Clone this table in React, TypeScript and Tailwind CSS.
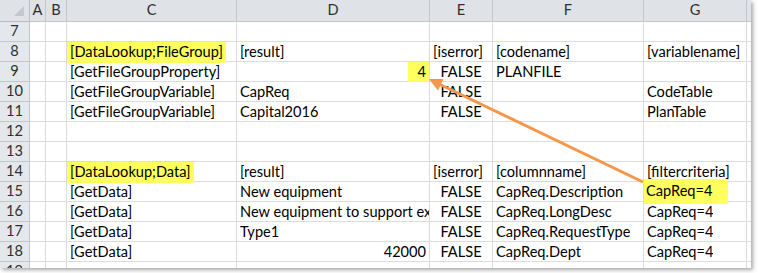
import React from 'react';

type Align = 'left' | 'center' | 'right';
type Cell = { text: string; align?: Align; mark?: 'lead' | 'num' | 'crit' };
type Row = { n: number; cells?: Partial<Record<'C' | 'D' | 'E' | 'F' | 'G', Cell>> };

const COLS = ['A', 'B', 'C', 'D', 'E', 'F', 'G'] as const;

const ROWS: Row[] = [
  { n: 7 },
  {
    n: 8,
    cells: {
      C: { text: '[DataLookup;FileGroup]', mark: 'lead' },
      D: { text: '[result]' },
      E: { text: '[iserror]' },
      F: { text: '[codename]' },
      G: { text: '[variablename]' },
    },
  },
  {
    n: 9,
    cells: {
      C: { text: '[GetFileGroupProperty]' },
      D: { text: '4', align: 'right', mark: 'num' },
      E: { text: 'FALSE', align: 'center' },
      F: { text: 'PLANFILE' },
    },
  },
  {
    n: 10,
    cells: {
      C: { text: '[GetFileGroupVariable]' },
      D: { text: 'CapReq' },
      E: { text: 'FALSE', align: 'center' },
      G: { text: 'CodeTable' },
    },
  },
  {
    n: 11,
    cells: {
      C: { text: '[GetFileGroupVariable]' },
      D: { text: 'Capital2016' },
      E: { text: 'FALSE', align: 'center' },
      G: { text: 'PlanTable' },
    },
  },
  { n: 12 },
  { n: 13 },
  {
    n: 14,
    cells: {
      C: { text: '[DataLookup;Data]', mark: 'lead' },
      D: { text: '[result]' },
      E: { text: '[iserror]' },
      F: { text: '[columnname]' },
      G: { text: '[filtercriteria]' },
    },
  },
  {
    n: 15,
    cells: {
      C: { text: '[GetData]' },
      D: { text: 'New equipment' },
      E: { text: 'FALSE', align: 'center' },
      F: { text: 'CapReq.Description' },
      G: { text: 'CapReq=4', mark: 'crit' },
    },
  },
  {
    n: 16,
    cells: {
      C: { text: '[GetData]' },
      D: { text: 'New equipment to support expansion' },
      E: { text: 'FALSE', align: 'center' },
      F: { text: 'CapReq.LongDesc' },
      G: { text: 'CapReq=4' },
    },
  },
  {
    n: 17,
    cells: {
      C: { text: '[GetData]' },
      D: { text: 'Type1' },
      E: { text: 'FALSE', align: 'center' },
      F: { text: 'CapReq.RequestType' },
      G: { text: 'CapReq=4' },
    },
  },
  {
    n: 18,
    cells: {
      C: { text: '[GetData]' },
      D: { text: '42000', align: 'right' },
      E: { text: 'FALSE', align: 'center' },
      F: { text: 'CapReq.Dept' },
      G: { text: 'CapReq=4' },
    },
  },
  { n: 19 },
];

function DataCell({ cell }: { cell?: Cell }) {
  const align = cell?.align ?? 'left';
  const justify =
    align === 'right' ? 'justify-end' : align === 'center' ? 'justify-center' : 'justify-start';

  let content: React.ReactNode = null;
  if (cell) {
    if (cell.mark === 'lead') {
      content = (
        <span className="flex h-[21px] items-center self-start bg-[#ffff5e] pl-[3px] pr-[3px]">{cell.text}</span>
      );
    } else if (cell.mark === 'num') {
      content = <span className="flex h-[20px] items-center self-start bg-[#ffff5e] pl-[10px] pr-[3px]">{cell.text}</span>;
    } else if (cell.mark === 'crit') {
      content = (
        <span className="-mt-[3px] flex h-[25px] items-center self-start bg-[#ffff5e] pl-[2px] pr-[16px]">{cell.text}</span>
      );
    } else {
      content = (
        <span
          className={`block max-w-full overflow-hidden leading-[18px] ${
            align === 'left' ? 'pl-[3px]' : align === 'right' ? 'pr-[3px]' : ''
          }`}
        >
          {cell.text}
        </span>
      );
    }
  }

  return (
    <div
      className={`flex h-[20px] items-center whitespace-nowrap border-b border-r border-[#dadcdd] ${justify} ${
        cell?.mark ? 'overflow-visible' : 'overflow-hidden'
      }`}
    >
      {content}
    </div>
  );
}

export default function App() {
  return (
    <div className="min-h-screen bg-white">
      <div
        className="relative h-[268px] w-[751px] overflow-hidden bg-white text-[14.6px] leading-none text-black shadow-[2px_2px_4px_rgba(0,0,0,0.35)]"
        style={{ fontFamily: 'Lato, "Liberation Sans", sans-serif' }}
      >
        <div className="grid grid-cols-[30px_16px_21px_170px_193px_63px_151px_103px_4px]">
          {/* corner + column headers */}
          <div className="relative h-[22px] border-b border-r border-[#b9bdc3] bg-[#dfe3e8]">
            <svg className="absolute left-[14px] top-[6px]" width="11" height="11" viewBox="0 0 11 11">
              <path d="M10 0 L10 10 L0 10 Z" fill="#c4c8ce" />
            </svg>
          </div>
          {COLS.map((c) => (
            <div
              key={c}
              className="flex h-[22px] items-center justify-center border-b border-r border-[#c3c7cd] bg-[#dfe3e8] text-[#2f2f2f]"
            >
              {c}
            </div>
          ))}
          <div className="h-[22px] border-b border-[#c3c7cd] bg-[#dfe3e8]" />

          {ROWS.map((row) => (
            <React.Fragment key={row.n}>
              <div className="flex h-[20px] items-center justify-center border-b border-r border-[#c3c7cd] bg-[#e4e8ec] text-[#2f2f2f]">
                {row.n}
              </div>
              <DataCell />
              <DataCell />
              <DataCell cell={row.cells?.C} />
              <DataCell cell={row.cells?.D} />
              <DataCell cell={row.cells?.E} />
              <DataCell cell={row.cells?.F} />
              <DataCell cell={row.cells?.G} />
              <div className="h-[20px] border-b border-[#dadcdd]" />
            </React.Fragment>
          ))}
        </div>

        {/* link arrow from the filter criteria back to the looked-up value */}
        <svg className="pointer-events-none absolute left-0 top-0" width="751" height="268">
          <line x1="643" y1="182" x2="440" y2="84.5" stroke="#f79646" strokeWidth="3" />
          <path d="M429 79 L438 90.5 L443.5 79 Z" fill="#f79646" />
        </svg>
      </div>
    </div>
  );
}
